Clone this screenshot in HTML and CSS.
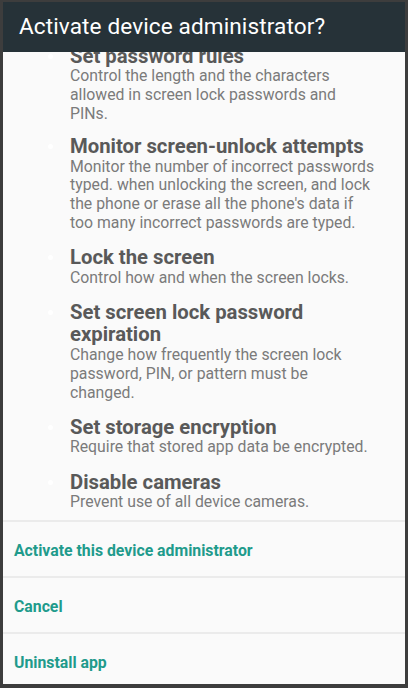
FILE: index.html
```html
<!DOCTYPE html>
<html>
<head>
<meta charset="utf-8">
<link rel="stylesheet" href="styles.css">
</head>
<body>
<div class="dialog">
  <div class="header">Activate device administrator?</div>
  <div class="scroll">
    <ul class="list">
      <li class="item first">
        <div class="title">Set password rules</div>
        <div class="desc">Control the length and the characters allowed in screen lock passwords and PINs.</div>
      </li>
      <li class="item">
        <div class="title">Monitor screen-unlock attempts</div>
        <div class="desc">Monitor the number of incorrect passwords typed. when unlocking the screen, and lock the phone or erase all the phone's data if too many incorrect passwords are typed.</div>
      </li>
      <li class="item">
        <div class="title">Lock the screen</div>
        <div class="desc">Control how and when the screen locks.</div>
      </li>
      <li class="item">
        <div class="title">Set screen lock password expiration</div>
        <div class="desc">Change how frequently the screen lock password, PIN, or pattern must be changed.</div>
      </li>
      <li class="item">
        <div class="title">Set storage encryption</div>
        <div class="desc">Require that stored app data be encrypted.</div>
      </li>
      <li class="item">
        <div class="title">Disable cameras</div>
        <div class="desc">Prevent use of all device cameras.</div>
      </li>
    </ul>
  </div>
  <div class="actions">
    <div class="action">Activate this device administrator</div>
    <div class="action">Cancel</div>
    <div class="action">Uninstall app</div>
  </div>
</div>
</body>
</html>
```

FILE: styles.css
```css
html, body {
  margin: 0;
  padding: 0;
}
body {
  background: #3d3d3d;
  padding: 2px 3px 0 3px;
  height: 688px;
  box-sizing: border-box;
  overflow: hidden;
  font-family: Roboto, "Liberation Sans", sans-serif;
}
.dialog {
  height: 682px;
  background: #fafafa;
  display: flex;
  flex-direction: column;
  overflow: hidden;
}
.header {
  height: 50px;
  flex: none;
  background: #263238;
  color: #ffffff;
  font-size: 22.6px;
  line-height: 50px;
  padding-left: 16px;
  letter-spacing: 0.1px;
}
.scroll {
  height: 468px;
  flex: none;
  overflow: hidden;
}
.list {
  list-style: none;
  margin: -7.25px 0 0 0;
  padding: 0 29px 0 67px;
}
.item {
  position: relative;
  padding-bottom: 13.6px;
}
.item.first {
  padding-bottom: 11.35px;
}
.item::before {
  content: "";
  position: absolute;
  left: -22px;
  top: 9px;
  width: 5px;
  height: 5px;
  border-radius: 50%;
  background: #ffffff;
}
.title {
  font-size: 20.3px;
  font-weight: bold;
  line-height: 22.7px;
  color: #595959;
}
.desc {
  font-size: 15.8px;
  line-height: 18.67px;
  color: #7b7b7b;
}
.actions {
  flex: none;
}
.action {
  height: 52px;
  padding-top: 2px;
  border-top: 2px solid #ebebeb;
  line-height: 54px;
  padding-left: 11px;
  font-size: 15.8px;
  font-weight: bold;
  color: #1f9b8c;
}
```
